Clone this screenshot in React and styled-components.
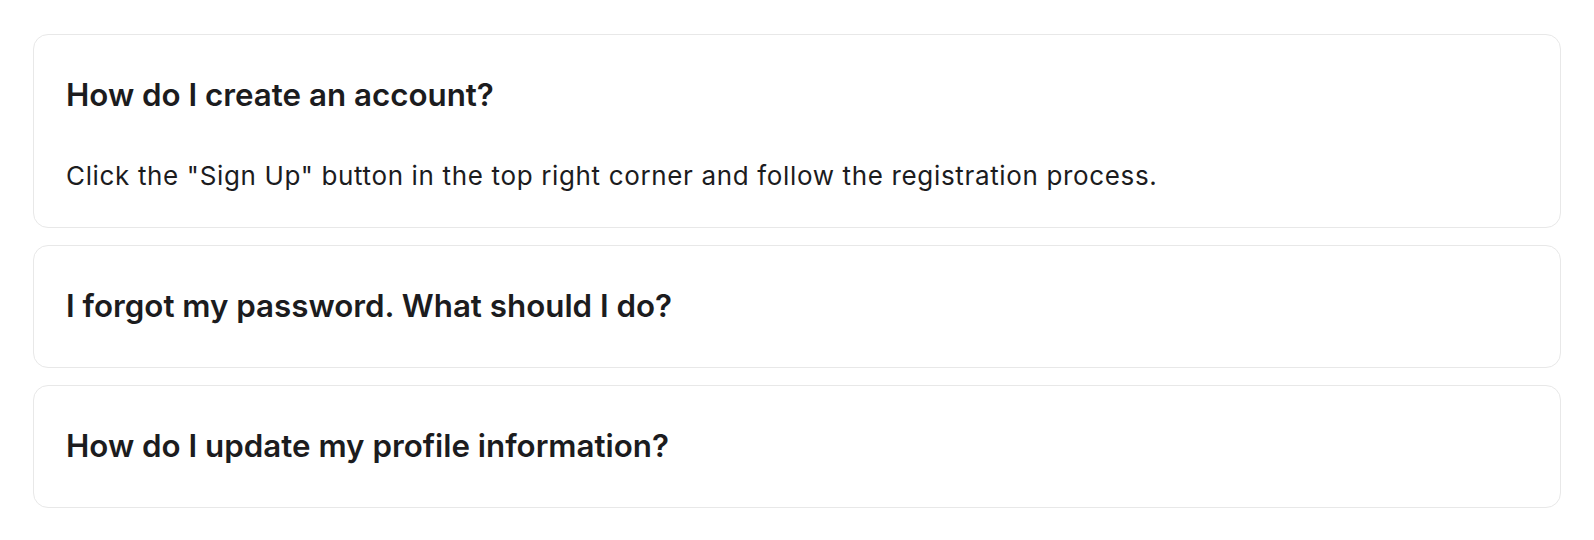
import React, { useState } from "react";
import styled, { createGlobalStyle } from "styled-components";

const GlobalStyle = createGlobalStyle`
  * {
    box-sizing: border-box;
  }
  body {
    margin: 0;
    background: #ffffff;
    font-family: Inter, "Noto Sans", "Liberation Sans", sans-serif;
    color: #1c1c1e;
  }
`;

const FaqList = styled.div`
  padding: 34px 33px;
  display: flex;
  flex-direction: column;
  gap: 17px;
`;

const FaqItem = styled.div`
  background: #ffffff;
  border: 1px solid #e8e8e8;
  border-radius: 15px;
  overflow: hidden;
`;

const Question = styled.button`
  display: block;
  width: 100%;
  padding: 40px 32px;
  border: none;
  background: none;
  text-align: left;
  font-family: inherit;
  font-size: 31.3px;
  font-weight: 600;
  line-height: 41px;
  color: #1c1c1e;
  cursor: pointer;
`;

const Answer = styled.p`
  margin: 0;
  padding: 0 32px 32px;
  font-size: 26px;
  letter-spacing: 0.65px;
  line-height: 39px;
  color: #1c1c1e;
`;

const faqs = [
  {
    q: "How do I create an account?",
    a: 'Click the "Sign Up" button in the top right corner and follow the registration process.',
  },
  {
    q: "I forgot my password. What should I do?",
    a: 'Click "Forgot password" on the login page and we will email you a link to reset it.',
  },
  {
    q: "How do I update my profile information?",
    a: "Open your account settings and edit the fields you want to change.",
  },
];

const App = () => {
  const [open, setOpen] = useState(0);

  return (
    <>
      <GlobalStyle />
      <FaqList>
        {faqs.map((item, i) => (
          <FaqItem key={item.q}>
            <Question onClick={() => setOpen(open === i ? -1 : i)}>{item.q}</Question>
            {open === i && <Answer>{item.a}</Answer>}
          </FaqItem>
        ))}
      </FaqList>
    </>
  );
};

export default App;
